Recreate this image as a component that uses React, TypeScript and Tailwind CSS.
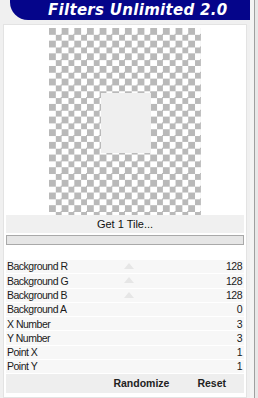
const rows = [
  { label: "Background R", value: "128", thumb: true },
  { label: "Background G", value: "128", thumb: true },
  { label: "Background B", value: "128", thumb: true },
  { label: "Background A", value: "0", thumb: false },
  { label: "X Number", value: "3", thumb: false },
  { label: "Y Number", value: "3", thumb: false },
  { label: "Point X", value: "1", thumb: false },
  { label: "Point Y", value: "1", thumb: false },
];

const App = () => {
  return (
    <div className="w-[258px] h-[398px] bg-[#f0f0f0] flex overflow-hidden font-['Liberation_Sans',Arial,sans-serif]">
      <div className="w-[250px] flex flex-col">
        {/* title bar */}
        <div className="ml-[10px] h-[20px] bg-[#05058a] rounded-bl-[18px] flex items-center pl-[38px]">
          <span className="text-white text-[15px] font-bold italic tracking-[0.3px] leading-none font-['DejaVu_Sans',sans-serif]">
            Filters Unlimited 2.0
          </span>
        </div>
        <div className="h-[4px]" />
        {/* main panel */}
        <div className="mx-[3px] flex-1 bg-white border border-[#e3e3e3] flex flex-col px-[2px] pb-[4px]">
          <div className="flex justify-center pt-[3px]">
            <div className="relative w-[152px] h-[187px] bg-[conic-gradient(#fff_25%,#b9b9b9_0_50%,#fff_0_75%,#b9b9b9_0)] bg-[length:12.67px_12.67px]">
              <div className="absolute left-[52px] top-[65px] w-[50px] h-[60px] bg-[#efefef]" />
            </div>
          </div>
          <div className="h-[18px] bg-[#f0f0f0] flex items-center justify-center text-[11px] text-[#111]">
            Get 1 Tile...
          </div>
          <div className="mt-[2px] h-[10px] border border-[#a9a9a9] bg-[#e6e6e6]" />
          <div className="h-[15px]" />
          <div className="flex flex-col">
            {rows.map((r) => (
              <div
                key={r.label}
                className="relative h-[14.3px] bg-[#f7f7f7] border-b border-white flex items-center justify-between px-[1px] text-[10.5px] leading-none text-[#1a1a1a] tracking-[-0.5px]"
              >
                <span>{r.label}</span>
                {r.thumb && (
                  <span className="absolute left-[118px] top-[3px] w-0 h-0 border-l-[5px] border-r-[5px] border-b-[6px] border-l-transparent border-r-transparent border-b-[#e6e6e6]" />
                )}
                <span className="pr-[1px]">{r.value}</span>
              </div>
            ))}
          </div>
          <div className="flex-1 bg-[#eeeeee] flex items-center justify-end gap-[28px] pr-[18px] text-[10.5px] font-bold text-[#222]">
            <span>Randomize</span>
            <span>Reset</span>
          </div>
        </div>
      </div>
      {/* right edge */}
      <div className="w-[8px] flex">
        <div className="w-[4px] bg-[#f4f4f4]" />
        <div className="w-[1px] bg-[#a0a0a0]" />
        <div className="w-[3px] bg-[#e8e8e8]" />
      </div>
    </div>
  );
};

export default App;
